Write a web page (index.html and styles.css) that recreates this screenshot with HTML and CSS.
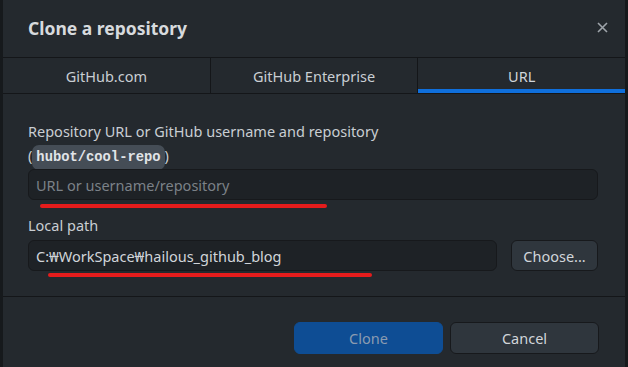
FILE: index.html
```html
<!DOCTYPE html>
<html lang="ko">
<head>
    <meta charset="UTF-8">
    <title>Clone a repository</title>
    <link rel="stylesheet" href="styles.css">
</head>
<body>
    <div class="dialog">
        <div class="dialog-header">
            <h1>Clone a repository</h1>
            <button class="close-btn" aria-label="Close">
                <svg width="11" height="11" viewBox="0 0 11 11">
                    <path d="M1 1 L10 10 M10 1 L1 10" stroke="#9ea4aa" stroke-width="1.6" fill="none"/>
                </svg>
            </button>
        </div>

        <div class="tabs">
            <div class="tab">GitHub.com</div>
            <div class="tab">GitHub Enterprise</div>
            <div class="tab active">URL</div>
        </div>

        <div class="dialog-body">
            <label class="field-label">Repository URL or GitHub username and repository<br>(<code>hubot/cool-repo</code>)</label>
            <div class="field">
                <input type="text" class="text-input" placeholder="URL or username/repository">
                <span class="mark mark-url"></span>
            </div>

            <label class="field-label">Local path</label>
            <div class="path-row">
                <div class="field grow">
                    <input type="text" class="text-input" value="C:₩WorkSpace₩hailous_github_blog">
                    <span class="mark mark-path"></span>
                </div>
                <button class="btn btn-choose">Choose...</button>
            </div>
        </div>

        <div class="dialog-footer">
            <button class="btn btn-primary">Clone</button>
            <button class="btn">Cancel</button>
        </div>
    </div>
</body>
</html>
```

FILE: styles.css
```css
body {
    margin: 0;
    background: #16191c;
    font-family: "Noto Sans", "Noto Sans CJK KR", sans-serif;
    color: #d1d5da;
}

.dialog {
    margin-left: 3px;
    width: 622px;
    height: 367px;
    background: #24292e;
}

.dialog-header {
    height: 58px;
    box-sizing: border-box;
    display: flex;
    align-items: center;
    justify-content: space-between;
    padding: 0 17px 2px 25px;
    border-bottom: 1px solid #141619;
}

.dialog-header h1 {
    margin: 0;
    font-size: 17.5px;
    font-weight: bold;
    color: #d7dadd;
}

.close-btn {
    background: none;
    border: none;
    padding: 0;
    width: 11px;
    height: 11px;
    display: flex;
}

.tabs {
    display: flex;
    height: 36px;
    box-sizing: border-box;
    border-bottom: 1px solid #141619;
}

.tab {
    flex: 1;
    display: flex;
    align-items: center;
    justify-content: center;
    padding-top: 1px;
    font-size: 14.5px;
    color: #c9ced3;
    border-right: 1px solid #141619;
}

.tab:last-child {
    border-right: none;
}

.tab.active {
    border-bottom: 4px solid #0f6fdc;
    padding-top: 5px;
    color: #d1d5da;
}

.dialog-body {
    height: 203px;
    box-sizing: border-box;
    padding: 25px 27px 0 25px;
    border-bottom: 1px solid #141619;
}

.field-label {
    display: block;
    font-size: 14.5px;
    line-height: 24px;
    color: #c9ced3;
}

code {
    font-family: "Liberation Mono", monospace;
    font-size: 13.8px;
    line-height: 16px;
    font-weight: bold;
    background: #454d56;
    color: #e1e4e8;
    border-radius: 7px;
    padding: 5px 4px;
}

.field {
    position: relative;
    margin: 2px 0 13px;
}

.grow {
    flex: 1;
    margin: 0;
}

.text-input {
    display: block;
    width: 100%;
    box-sizing: border-box;
    height: 31px;
    padding: 0 7px;
    background: #1e2226;
    border: 1px solid #17191c;
    border-radius: 6px;
    font-family: "Noto Sans", "Noto Sans CJK KR", sans-serif;
    font-size: 14.5px;
    color: #d1d5da;
    outline: none;
}

.text-input::placeholder {
    color: #7b8188;
}

/* red annotation strokes drawn over the screenshot */
.mark {
    position: absolute;
    height: 4px;
    background: #e51c1c;
    border-radius: 2px;
}

.mark-url {
    left: 12px;
    width: 287px;
    top: 35px;
}

.mark-path {
    left: 20px;
    width: 324px;
    top: 33px;
}

.path-row {
    display: flex;
    gap: 14px;
    margin-top: 3px;
}

.btn {
    height: 31px;
    padding: 0 12px;
    background: #2f363d;
    border: 1px solid #17191c;
    border-radius: 6px;
    color: #d1d5da;
    font-family: "Noto Sans", "Noto Sans CJK KR", sans-serif;
    font-size: 14.5px;
}

.btn-choose {
    width: 87px;
    padding: 0;
}

.dialog-footer {
    display: flex;
    justify-content: flex-end;
    gap: 7px;
    padding: 25px 26px 0 0;
}

.dialog-footer .btn {
    width: 149px;
    height: 32px;
}

.btn-primary {
    background: #0e4d94;
    border-color: #0e4d94;
    color: #8a9bb0;
}
```
